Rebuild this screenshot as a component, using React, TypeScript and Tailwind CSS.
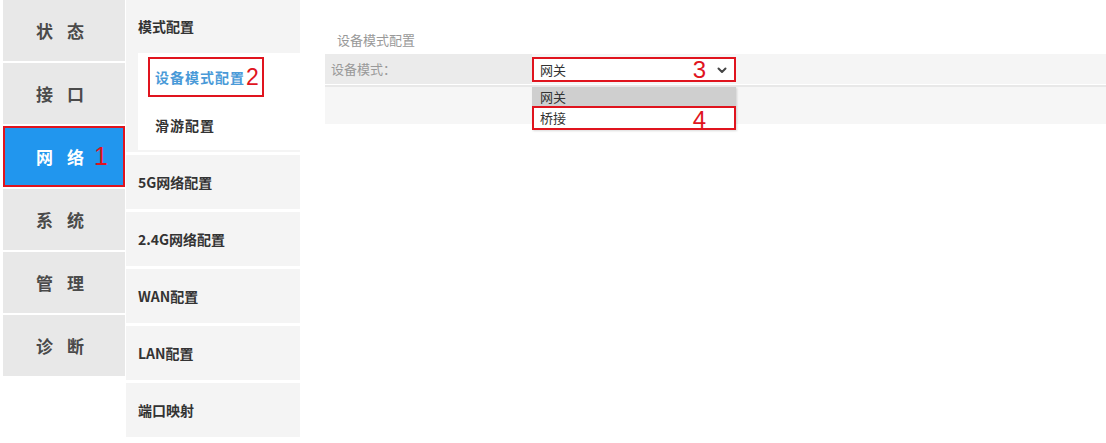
import React from 'react';

const cjk = "font-['Noto_Sans_CJK_SC','Noto_Sans',sans-serif]";
const num = "font-['Liberation_Sans',Arial,sans-serif]";

const App: React.FC = () => {
  const mainMenu = [
    { chars: ['状', '态'] },
    { chars: ['接', '口'] },
    { chars: ['网', '络'], active: true },
    { chars: ['系', '统'] },
    { chars: ['管', '理'] },
    { chars: ['诊', '断'] }
  ];

  const subMenu = ['5G网络配置', '2.4G网络配置', 'WAN配置', 'LAN配置', '端口映射'];

  return (
    <div className={`w-[1106px] h-[443px] bg-white flex ${cjk} overflow-hidden`}>
      {/* Main menu */}
      <div className="w-[122px] ml-[3px] flex flex-col gap-[2px]">
        {mainMenu.map((item) =>
          item.active ? (
            <div
              key={item.chars.join('')}
              className="h-[61px] bg-[#2196ee] border-2 border-[#e0141e] flex items-center pl-[31px] gap-[14px] text-white font-bold text-[17px]"
            >
              <span>{item.chars[0]}</span>
              <span>{item.chars[1]}</span>
              <span className={`${num} text-[#e0141e] font-normal text-[25px] -ml-[4px]`}>1</span>
            </div>
          ) : (
            <div
              key={item.chars.join('')}
              className="h-[61px] bg-[#e8e8e8] flex items-center pl-[33px] gap-[14px] text-[#4a4a4a] font-bold text-[17px]"
            >
              <span>{item.chars[0]}</span>
              <span>{item.chars[1]}</span>
            </div>
          )
        )}
      </div>

      {/* Sub menu */}
      <div className="w-[174px] ml-[1px] flex flex-col gap-[3px]">
        <div className="h-[152px] bg-[#f4f4f4] flex flex-col">
          <div className="h-[53px] flex items-center pl-[12px] text-[14px] font-bold text-[#333]">模式配置</div>
          <div className="ml-[12px] h-[97px] bg-white flex flex-col">
            <div className="h-[48px] flex items-center pl-[10px]">
              <div className="h-[40px] w-[116px] border-2 border-[#e0141e] flex items-center pl-[5px]">
                <span className="text-[14px] font-bold text-[#4a9ad8] tracking-[1px]">设备模式配置</span>
                <span className={`${num} text-[#e0141e] text-[23px] leading-none ml-[1px]`}>2</span>
              </div>
            </div>
            <div className="flex-1 flex items-center pl-[17px] text-[14px] font-bold text-[#333] tracking-[1px]">
              滑游配置
            </div>
          </div>
        </div>
        {subMenu.map((label) => (
          <div key={label} className="h-[54px] bg-[#f4f4f4] flex items-center pl-[12px] text-[14px] font-bold text-[#333]">
            {label}
          </div>
        ))}
      </div>

      {/* Content */}
      <div className="flex-1 pl-[25px] flex flex-col">
        <div className="h-[54px] flex items-end pl-[12px] pb-[5px] text-[13px] text-[#999]">
          设备模式配置
        </div>
        <div className="flex h-[30px]">
          <div className="w-[207px] bg-[#ebebeb] flex items-center pl-[6px] text-[13px] text-[#999]">设备模式：</div>
          <div className="flex-1 bg-[#f5f5f5] relative">
            <div className="absolute left-0 top-[3px] w-[204px] h-[25px] bg-white border-2 border-[#e0141e] flex items-center pl-[6px] pr-[6px]">
              <span className="text-[13px] text-[#333]">网关</span>
              <span className={`${num} ml-auto text-[#e0141e] text-[24px] leading-none`}>3</span>
              <svg className="ml-[10px] w-[12px] h-[12px]" viewBox="0 0 12 12">
                <path d="M2.5 4.5 L6 8 L9.5 4.5" fill="none" stroke="#444" strokeWidth="2" strokeLinecap="round" strokeLinejoin="round" />
              </svg>
            </div>
          </div>
        </div>
        <div className="h-[2px] bg-[#e8e8e8] mt-[1px]" />
        <div className="h-[37px] bg-[#f6f6f6] relative">
          <div className="absolute left-[207px] top-0 w-[204px] flex flex-col shadow-[1px_1px_2px_rgba(0,0,0,0.15)]">
            <div className="h-[19px] bg-[#cfcfcf] flex items-center pl-[8px] text-[13px] text-[#333]">网关</div>
            <div className="h-[24px] bg-white border-2 border-[#e0141e] flex items-center pl-[6px] pr-[28px]">
              <span className="text-[13px] text-[#333]">桥接</span>
              <span className={`${num} ml-auto text-[#e0141e] text-[24px] leading-none mt-[4px]`}>4</span>
            </div>
          </div>
        </div>
      </div>
    </div>
  );
};

export default App;
